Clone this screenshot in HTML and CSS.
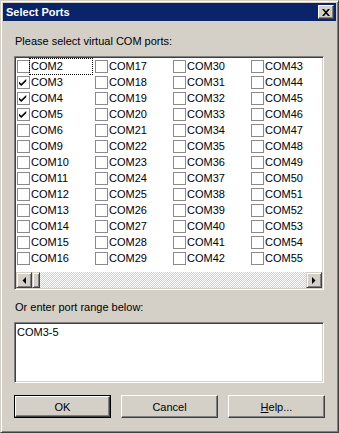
FILE: index.html
```html
<!DOCTYPE html>
<html>
<head>
<meta charset="utf-8">
<link rel="stylesheet" href="styles.css">
</head>
<body>
<div class="window">
  <div class="titlebar">
    <span class="title">Select Ports</span>
    <span class="close"><svg width="8" height="7" viewBox="0 0 8 7"><path d="M0 0h2l2 2.2L6 0h2L5 3.5 8 7H6L4 4.8 2 7H0l3-3.5z" fill="#000"/></svg></span>
  </div>
  <div class="content">
    <div class="label label-top">Please select virtual COM ports:</div>
    <div class="listbox">
      <div class="grid">
        <div class="item"><span class="cb"></span><span class="lbl focus">COM2</span></div>
        <div class="item"><span class="cb"><svg class="check" width="11" height="11" viewBox="0 0 11 11"><path d="M1 4.5l2.2 2.3L8.2 2v2.2L3.2 9 1 6.8z" fill="#000"/></svg></span><span class="lbl">COM3</span></div>
        <div class="item"><span class="cb"><svg class="check" width="11" height="11" viewBox="0 0 11 11"><path d="M1 4.5l2.2 2.3L8.2 2v2.2L3.2 9 1 6.8z" fill="#000"/></svg></span><span class="lbl">COM4</span></div>
        <div class="item"><span class="cb"><svg class="check" width="11" height="11" viewBox="0 0 11 11"><path d="M1 4.5l2.2 2.3L8.2 2v2.2L3.2 9 1 6.8z" fill="#000"/></svg></span><span class="lbl">COM5</span></div>
        <div class="item"><span class="cb"></span><span class="lbl">COM6</span></div>
        <div class="item"><span class="cb"></span><span class="lbl">COM9</span></div>
        <div class="item"><span class="cb"></span><span class="lbl">COM10</span></div>
        <div class="item"><span class="cb"></span><span class="lbl">COM11</span></div>
        <div class="item"><span class="cb"></span><span class="lbl">COM12</span></div>
        <div class="item"><span class="cb"></span><span class="lbl">COM13</span></div>
        <div class="item"><span class="cb"></span><span class="lbl">COM14</span></div>
        <div class="item"><span class="cb"></span><span class="lbl">COM15</span></div>
        <div class="item"><span class="cb"></span><span class="lbl">COM16</span></div>
        <div class="item"><span class="cb"></span><span class="lbl">COM17</span></div>
        <div class="item"><span class="cb"></span><span class="lbl">COM18</span></div>
        <div class="item"><span class="cb"></span><span class="lbl">COM19</span></div>
        <div class="item"><span class="cb"></span><span class="lbl">COM20</span></div>
        <div class="item"><span class="cb"></span><span class="lbl">COM21</span></div>
        <div class="item"><span class="cb"></span><span class="lbl">COM22</span></div>
        <div class="item"><span class="cb"></span><span class="lbl">COM23</span></div>
        <div class="item"><span class="cb"></span><span class="lbl">COM24</span></div>
        <div class="item"><span class="cb"></span><span class="lbl">COM25</span></div>
        <div class="item"><span class="cb"></span><span class="lbl">COM26</span></div>
        <div class="item"><span class="cb"></span><span class="lbl">COM27</span></div>
        <div class="item"><span class="cb"></span><span class="lbl">COM28</span></div>
        <div class="item"><span class="cb"></span><span class="lbl">COM29</span></div>
        <div class="item"><span class="cb"></span><span class="lbl">COM30</span></div>
        <div class="item"><span class="cb"></span><span class="lbl">COM31</span></div>
        <div class="item"><span class="cb"></span><span class="lbl">COM32</span></div>
        <div class="item"><span class="cb"></span><span class="lbl">COM33</span></div>
        <div class="item"><span class="cb"></span><span class="lbl">COM34</span></div>
        <div class="item"><span class="cb"></span><span class="lbl">COM35</span></div>
        <div class="item"><span class="cb"></span><span class="lbl">COM36</span></div>
        <div class="item"><span class="cb"></span><span class="lbl">COM37</span></div>
        <div class="item"><span class="cb"></span><span class="lbl">COM38</span></div>
        <div class="item"><span class="cb"></span><span class="lbl">COM39</span></div>
        <div class="item"><span class="cb"></span><span class="lbl">COM40</span></div>
        <div class="item"><span class="cb"></span><span class="lbl">COM41</span></div>
        <div class="item"><span class="cb"></span><span class="lbl">COM42</span></div>
        <div class="item"><span class="cb"></span><span class="lbl">COM43</span></div>
        <div class="item"><span class="cb"></span><span class="lbl">COM44</span></div>
        <div class="item"><span class="cb"></span><span class="lbl">COM45</span></div>
        <div class="item"><span class="cb"></span><span class="lbl">COM46</span></div>
        <div class="item"><span class="cb"></span><span class="lbl">COM47</span></div>
        <div class="item"><span class="cb"></span><span class="lbl">COM48</span></div>
        <div class="item"><span class="cb"></span><span class="lbl">COM49</span></div>
        <div class="item"><span class="cb"></span><span class="lbl">COM50</span></div>
        <div class="item"><span class="cb"></span><span class="lbl">COM51</span></div>
        <div class="item"><span class="cb"></span><span class="lbl">COM52</span></div>
        <div class="item"><span class="cb"></span><span class="lbl">COM53</span></div>
        <div class="item"><span class="cb"></span><span class="lbl">COM54</span></div>
        <div class="item"><span class="cb"></span><span class="lbl">COM55</span></div>
      </div>
      <div class="hscroll">
        <span class="sbtn"><svg width="4" height="7" viewBox="0 0 4 7"><path d="M4 0v7L0.5 3.5z" fill="#000"/></svg></span>
        <span class="thumb"></span>
        <span class="track"></span>
        <span class="sbtn"><svg width="4" height="7" viewBox="0 0 4 7"><path d="M0 0v7l3.5-3.5z" fill="#000"/></svg></span>
      </div>
    </div>
    <div class="label label-range">Or enter port range below:</div>
    <div class="textbox">COM3-5</div>
    <div class="buttons">
      <div class="btn btn-default"><span class="btn-inner">OK</span></div>
      <div class="btn"><span class="btn-inner">Cancel</span></div>
      <div class="btn"><span class="btn-inner"><u>H</u>elp...</span></div>
    </div>
  </div>
</div>
</body>
</html>
```

FILE: styles.css
```css
html, body {
  margin: 0;
  padding: 0;
  background: #d4d0c8;
}

body {
  font-family: "Liberation Sans", Arial, sans-serif;
  font-size: 11px;
  color: #000;
}

.window {
  width: 339px;
  height: 433px;
  box-sizing: border-box;
  background: #d4d0c8;
  border: 1px solid;
  border-color: #d4d0c8 #404040 #404040 #d4d0c8;
  box-shadow: inset 1px 1px #fff, inset -1px -1px #808080;
  padding: 2px;
  display: flex;
  flex-direction: column;
}

.titlebar {
  height: 18px;
  background: #0a246a;
  display: flex;
  align-items: center;
  justify-content: space-between;
  padding: 0 2px 0 3px;
}

.title {
  font-weight: bold;
  font-size: 11px;
  color: #fff;
}

.close {
  width: 16px;
  height: 14px;
  box-sizing: border-box;
  background: #d4d0c8;
  border: 1px solid;
  border-color: #fff #404040 #404040 #fff;
  box-shadow: inset -1px -1px #808080;
  display: flex;
  align-items: center;
  justify-content: center;
  padding-right: 1px;
}

.content {
  padding: 0 11px;
  display: flex;
  flex-direction: column;
}

.label {
  line-height: 13px;
  padding-left: 1px;
}

.label-top {
  margin-top: 14px;
}

.listbox {
  margin-top: 8px;
  height: 234px;
  margin-right: 1px;
  box-sizing: border-box;
  background: #fff;
  border: 1px solid;
  border-color: #808080 #fff #fff #808080;
  box-shadow: inset 1px 1px #404040, inset -1px -1px #d4d0c8;
  padding: 1px;
  display: flex;
  flex-direction: column;
}

.grid {
  flex: 1;
  display: grid;
  grid-auto-flow: column;
  grid-template-rows: repeat(13, 16px);
  grid-template-columns: repeat(4, 78px);
  align-content: start;
}

.item {
  display: flex;
  align-items: center;
  height: 16px;
}

.cb {
  width: 13px;
  height: 13px;
  box-sizing: border-box;
  border: 1px solid #8a8a8a;
  background: #fff;
  margin-left: 1px;
  flex: none;
  display: flex;
}

.check {
  display: block;
}

.lbl {
  padding-left: 1px;
  line-height: 15px;
  height: 15px;
  white-space: nowrap;
}

.focus {
  outline: 1px dotted #000;
  outline-offset: -1px;
  width: 64px;
  height: 17px;
  line-height: 17px;
  box-sizing: border-box;
  margin-left: -1px;
  padding-left: 2px;
}

.hscroll {
  height: 16px;
  display: flex;
}

.sbtn, .thumb {
  width: 16px;
  height: 16px;
  box-sizing: border-box;
  background: #d4d0c8;
  border: 1px solid;
  border-color: #d4d0c8 #404040 #404040 #d4d0c8;
  box-shadow: inset 1px 1px #fff, inset -1px -1px #808080;
  display: flex;
  align-items: center;
  justify-content: center;
  flex: none;
}

.thumb {
  width: 8px;
}

.track {
  flex: 1;
  background: repeating-conic-gradient(#d4d0c8 0 25%, #fff 0 50%) 0 0 / 2px 2px;
}

.label-range {
  margin-top: 11px;
}

.textbox {
  margin-top: 8px;
  margin-right: 1px;
  height: 61px;
  box-sizing: border-box;
  background: #fff;
  border: 1px solid;
  border-color: #808080 #fff #fff #808080;
  box-shadow: inset 1px 1px #404040, inset -1px -1px #d4d0c8;
  padding: 3px 2px;
  line-height: 13px;
}

.buttons {
  margin-top: 12px;
  display: flex;
  justify-content: space-between;
}

.btn {
  width: 97px;
  height: 23px;
  box-sizing: border-box;
  display: flex;
}

.btn-inner {
  flex: 1;
  display: flex;
  align-items: center;
  justify-content: center;
  background: #d4d0c8;
  border: 1px solid;
  border-color: #fff #404040 #404040 #fff;
  box-shadow: inset -1px -1px #808080;
}

.btn-default {
  border: 1px solid #000;
}
```
